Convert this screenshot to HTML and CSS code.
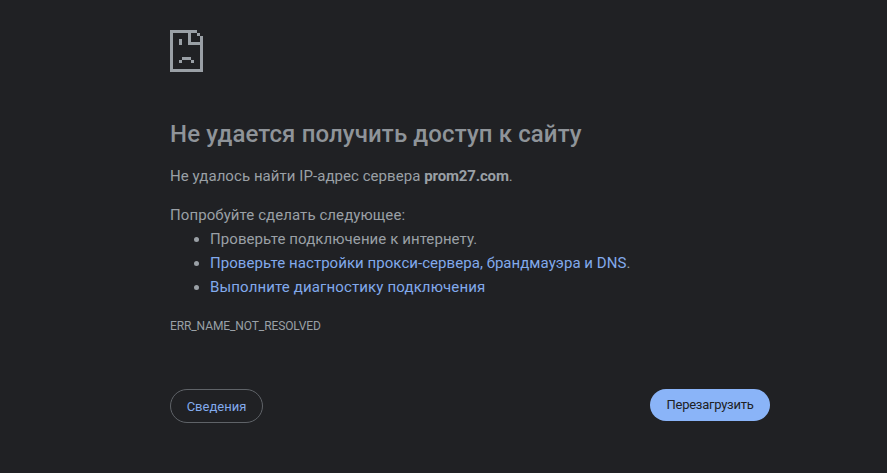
FILE: index.html
```html
<!DOCTYPE html>
<html lang="ru">
<head>
    <meta charset="UTF-8">
    <meta name="viewport" content="width=device-width, initial-scale=1.0">
    <title>prom27.com</title>
    <link rel="stylesheet" href="styles.css">
</head>
<body>
    <div class="wrapper">
        <svg class="sad-icon" width="33" height="42" viewBox="0 0 33 42" shape-rendering="crispEdges" aria-hidden="true">
            <!-- page outline -->
            <rect x="0" y="0" width="27" height="3"/>
            <rect x="0" y="0" width="3" height="42"/>
            <rect x="0" y="39" width="33" height="3"/>
            <rect x="30" y="6" width="3" height="36"/>
            <rect x="27" y="3" width="3" height="3"/>
            <!-- fold -->
            <rect x="18" y="0" width="3" height="15"/>
            <rect x="18" y="12" width="15" height="3"/>
            <!-- face -->
            <rect x="9" y="9" width="3" height="6"/>
            <rect x="12" y="27" width="9" height="3"/>
            <rect x="9" y="30" width="3" height="3"/>
            <rect x="21" y="30" width="3" height="3"/>
        </svg>

        <h1 class="title">Не удается получить доступ к сайту</h1>
        <p class="summary">Не удалось найти IP-адрес сервера <strong>prom27.com</strong>.</p>

        <div class="suggestions">
            <p>Попробуйте сделать следующее:</p>
            <ul>
                <li>Проверьте подключение к интернету.</li>
                <li><a class="link-settings" href="#">Проверьте настройки прокси-сервера, брандмауэра и DNS</a>.</li>
                <li><a class="link-diagnostics" href="#">Выполните диагностику подключения</a></li>
            </ul>
        </div>

        <div class="error-code">ERR_NAME_NOT_RESOLVED</div>

        <div class="nav-row">
            <button class="btn-details">Сведения</button>
            <button class="btn-reload">Перезагрузить</button>
        </div>
    </div>
</body>
</html>
```

FILE: styles.css
```css
* {
    box-sizing: border-box;
    margin: 0;
    padding: 0;
}

html, body {
    height: 100%;
}

body {
    background: #202124;
    color: #9aa0a6;
    font-family: Roboto, "Liberation Sans", sans-serif;
    font-size: 15px;
    line-height: 20px;
    letter-spacing: 0.08px;
    overflow: hidden;
}

.wrapper {
    width: 600px;
    margin-left: 170px;
    padding-top: 30px;
}

.sad-icon {
    display: block;
    fill: #9aa0a6;
}

.title {
    margin-top: 46px;
    font-size: 24px;
    font-weight: 500;
    line-height: 32px;
    letter-spacing: 0.12px;
    color: #8f9499;
}

.summary {
    margin-top: 16px;
    letter-spacing: 0.06px;
}

.summary strong {
    font-weight: 700;
    letter-spacing: -0.15px;
}

.suggestions {
    margin-top: 19px;
}

.suggestions ul {
    margin-top: 4px;
    padding-left: 40px;
}

.suggestions li {
    margin-bottom: 4px;
}

.suggestions li::marker {
    color: #9aa0a6;
}

a {
    color: #82aaec;
    text-decoration: none;
}

.link-settings {
    letter-spacing: 0.05px;
}

.link-diagnostics {
    letter-spacing: 0.14px;
}

.error-code {
    margin-top: 21px;
    font-size: 12px;
    line-height: 16px;
    letter-spacing: -0.1px;
}

.nav-row {
    display: flex;
    justify-content: space-between;
    align-items: flex-start;
    margin-top: 55px;
}

button {
    font-family: Roboto, "Liberation Sans", sans-serif;
    font-size: 13px;
    line-height: 16px;
    border-radius: 17px;
    cursor: pointer;
}

.btn-details {
    width: 93px;
    height: 34px;
    padding-top: 2px;
    background: transparent;
    border: 1px solid #5f6368;
    color: #82aaec;
}

.btn-reload {
    width: 120px;
    height: 32px;
    background: #8ab4f8;
    border: none;
    color: #202124;
    letter-spacing: -0.25px;
}
```
